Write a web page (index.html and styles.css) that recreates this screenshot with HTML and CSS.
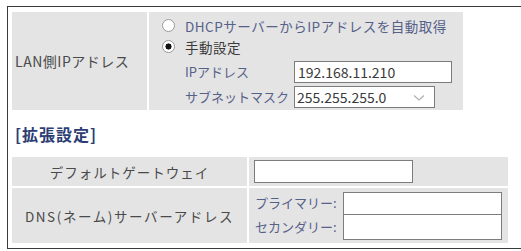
FILE: index.html
```html
<!DOCTYPE html>
<html>
  <head>
    <meta charset="UTF-8">
    <title>LAN側設定</title>
    <link rel="stylesheet" href="styles.css">
  </head>
  <body>
    <div class="frame">

      <div class="lan">
        <div class="cell label">LAN側IPアドレス</div>
        <div class="cell options">
          <label class="choice"><input type="radio" name="mode"> DHCPサーバーからIPアドレスを自動取得</label>
          <label class="choice manual"><input type="radio" name="mode" checked> 手動設定</label>
          <div class="fields">
            <span class="sub">IPアドレス</span>
            <input class="text ip" type="text" value="192.168.11.210">
            <span class="sub">サブネットマスク</span>
            <div class="select">
              <select>
                <option>255.255.255.0</option>
              </select>
              <svg class="chev" width="12" height="8" viewBox="0 0 12 8"><path d="M1 1.5 L6 6 L11 1.5" fill="none" stroke="#b0b0b0" stroke-width="1.2"/></svg>
            </div>
          </div>
        </div>
      </div>

      <div class="heading">[拡張設定]</div>

      <div class="ext">
        <div class="cell label center">デフォルトゲートウェイ</div>
        <div class="cell gw">
          <input class="text" type="text">
        </div>
        <div class="cell label center wide">DNS(ネーム)サーバーアドレス</div>
        <div class="cell dns">
          <span class="sub">プライマリー:</span>
          <input class="text" type="text">
          <span class="sub">セカンダリー:</span>
          <input class="text second" type="text">
        </div>
      </div>

    </div>
  </body>
</html>
```

FILE: styles.css
```css
body {
  margin: 6px 0 0 7px;
  font-family: "Noto Sans CJK JP", "Noto Sans", sans-serif;
  font-size: 13px;
  color: #4a4a4a;
  background: white;
}

.frame {
  width: 520px;
  height: 236px;
  border: 1px solid #3a3a3a;
  border-right: none;
  padding: 5px 0 0 4px;
}

.cell {
  background-color: #e4e4e4;
}

.label {
  display: flex;
  align-items: center;
  padding-left: 3px;
  font-size: 14px;
  letter-spacing: 0.5px;
  line-height: 16px;
  white-space: nowrap;
}

.center {
  justify-content: center;
  padding-left: 0;
  font-size: 13.5px;
  letter-spacing: 1px;
}

.wide {
  letter-spacing: 1.6px;
}

.lan {
  display: grid;
  grid-template-columns: 135px 314px;
  column-gap: 2px;
  width: 451px;
}

.options {
  padding: 3px 0 2px 13px;
  height: 93px;
}

.choice {
  display: flex;
  align-items: center;
  height: 21px;
  color: #56618a;
  font-size: 13.5px;
  letter-spacing: 0.5px;
  line-height: 16px;
  white-space: nowrap;
}

.choice.manual {
  color: #3a3a3a;
}

.choice input {
  appearance: none;
  flex-shrink: 0;
  box-sizing: border-box;
  width: 13px;
  height: 13px;
  margin: 0 10px 0 0;
  border: 1px solid #9a9a9a;
  border-radius: 50%;
  background: white;
}

.choice input:checked {
  background: radial-gradient(circle, #111 0 2.8px, white 3.3px);
}

.fields {
  display: grid;
  grid-template-columns: 109px 158px;
  row-gap: 3px;
  align-items: center;
  margin-top: 4px;
  padding-left: 23px;
}

.sub {
  color: #56618a;
  line-height: 16px;
  white-space: nowrap;
}

.text {
  box-sizing: border-box;
  height: 22px;
  border: 1px solid #7c7c7c;
  background: white;
  font-family: "Noto Sans CJK JP", "Noto Sans", sans-serif;
  font-size: 14px;
  color: #3a3a3a;
  padding: 0 3px;
  margin: 0;
  outline: none;
}

.ip {
  width: 158px;
}

.select {
  position: relative;
  width: 141px;
}

.select select {
  appearance: none;
  box-sizing: border-box;
  width: 141px;
  height: 22px;
  border: 1px solid #7c7c7c;
  border-radius: 0;
  background: white;
  font-family: "Noto Sans CJK JP", "Noto Sans", sans-serif;
  font-size: 14px;
  color: #3a3a3a;
  padding: 0 2px;
  margin: 0;
}

.chev {
  position: absolute;
  right: 10px;
  top: 8px;
}

.heading {
  display: flex;
  align-items: center;
  height: 47px;
  padding-left: 3px;
  font-size: 16px;
  font-weight: bold;
  color: #2b3d73;
  letter-spacing: 1px;
}

.ext {
  display: grid;
  grid-template-columns: 235px 259px;
  grid-template-rows: 29px 55px;
  gap: 2px;
}

.gw {
  display: flex;
  align-items: center;
  padding-left: 5px;
}

.gw .text {
  width: 159px;
  height: 23px;
}

.dns {
  display: grid;
  grid-template-columns: 88px 159px;
  align-content: center;
  align-items: center;
  padding-left: 6px;
}

.dns .text {
  width: 159px;
  height: 23px;
}

.dns .second {
  margin-top: -1px;
  height: 26px;
}
```
